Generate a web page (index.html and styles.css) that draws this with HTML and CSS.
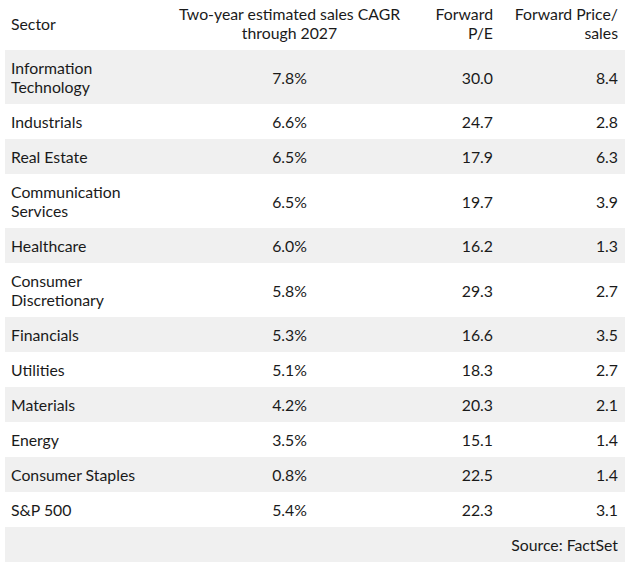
FILE: index.html
```html
<!DOCTYPE html>
<html>
<head>
<meta charset="utf-8">
<link rel="stylesheet" href="styles.css">
</head>
<body>
<div class="wrap">
<table class="sectors">
  <colgroup>
    <col class="c1"><col class="c2"><col class="c3"><col class="c4">
  </colgroup>
  <thead>
    <tr>
      <th class="left">Sector</th>
      <th class="center">Two-year estimated sales CAGR<br>through 2027</th>
      <th class="right">Forward<br>P/E</th>
      <th class="right">Forward Price/<br>sales</th>
    </tr>
  </thead>
  <tbody>
    <tr class="alt"><td>Information<br>Technology</td><td class="center">7.8%</td><td class="right">30.0</td><td class="right">8.4</td></tr>
    <tr><td>Industrials</td><td class="center">6.6%</td><td class="right">24.7</td><td class="right">2.8</td></tr>
    <tr class="alt"><td>Real Estate</td><td class="center">6.5%</td><td class="right">17.9</td><td class="right">6.3</td></tr>
    <tr><td>Communication<br>Services</td><td class="center">6.5%</td><td class="right">19.7</td><td class="right">3.9</td></tr>
    <tr class="alt"><td>Healthcare</td><td class="center">6.0%</td><td class="right">16.2</td><td class="right">1.3</td></tr>
    <tr><td>Consumer<br>Discretionary</td><td class="center">5.8%</td><td class="right">29.3</td><td class="right">2.7</td></tr>
    <tr class="alt"><td>Financials</td><td class="center">5.3%</td><td class="right">16.6</td><td class="right">3.5</td></tr>
    <tr><td>Utilities</td><td class="center">5.1%</td><td class="right">18.3</td><td class="right">2.7</td></tr>
    <tr class="alt"><td>Materials</td><td class="center">4.2%</td><td class="right">20.3</td><td class="right">2.1</td></tr>
    <tr><td>Energy</td><td class="center">3.5%</td><td class="right">15.1</td><td class="right">1.4</td></tr>
    <tr class="alt"><td>Consumer Staples</td><td class="center">0.8%</td><td class="right">22.5</td><td class="right">1.4</td></tr>
    <tr><td>S&amp;P 500</td><td class="center">5.4%</td><td class="right">22.3</td><td class="right">3.1</td></tr>
    <tr class="alt"><td colspan="4" class="right">Source: FactSet</td></tr>
  </tbody>
</table>
</div>
</body>
</html>
```

FILE: styles.css
```css
html, body {
  margin: 0;
  padding: 0;
  background: #ffffff;
}
.wrap {
  padding: 0 8px 0 5px;
}
.sectors {
  width: 620px;
  table-layout: fixed;
  border-collapse: collapse;
  font-family: Lato, "Liberation Sans", sans-serif;
  font-size: 15.8px;
  line-height: 19px;
  color: #1a1a1a;
}
.c1 { width: 167px; }
.c2 { width: 236px; }
.c3 { width: 92px; }
.c4 { width: 125px; }
.sectors th {
  font-weight: normal;
  white-space: nowrap;
  padding: 4px 7px 8px 6px;
  vertical-align: middle;
}
.sectors td {
  padding: 8px 7px 8px 6px;
  vertical-align: middle;
}
.sectors tr.alt {
  background: #f0f0f0;
}
.left { text-align: left; }
.center { text-align: center; }
.right { text-align: right; }
```
